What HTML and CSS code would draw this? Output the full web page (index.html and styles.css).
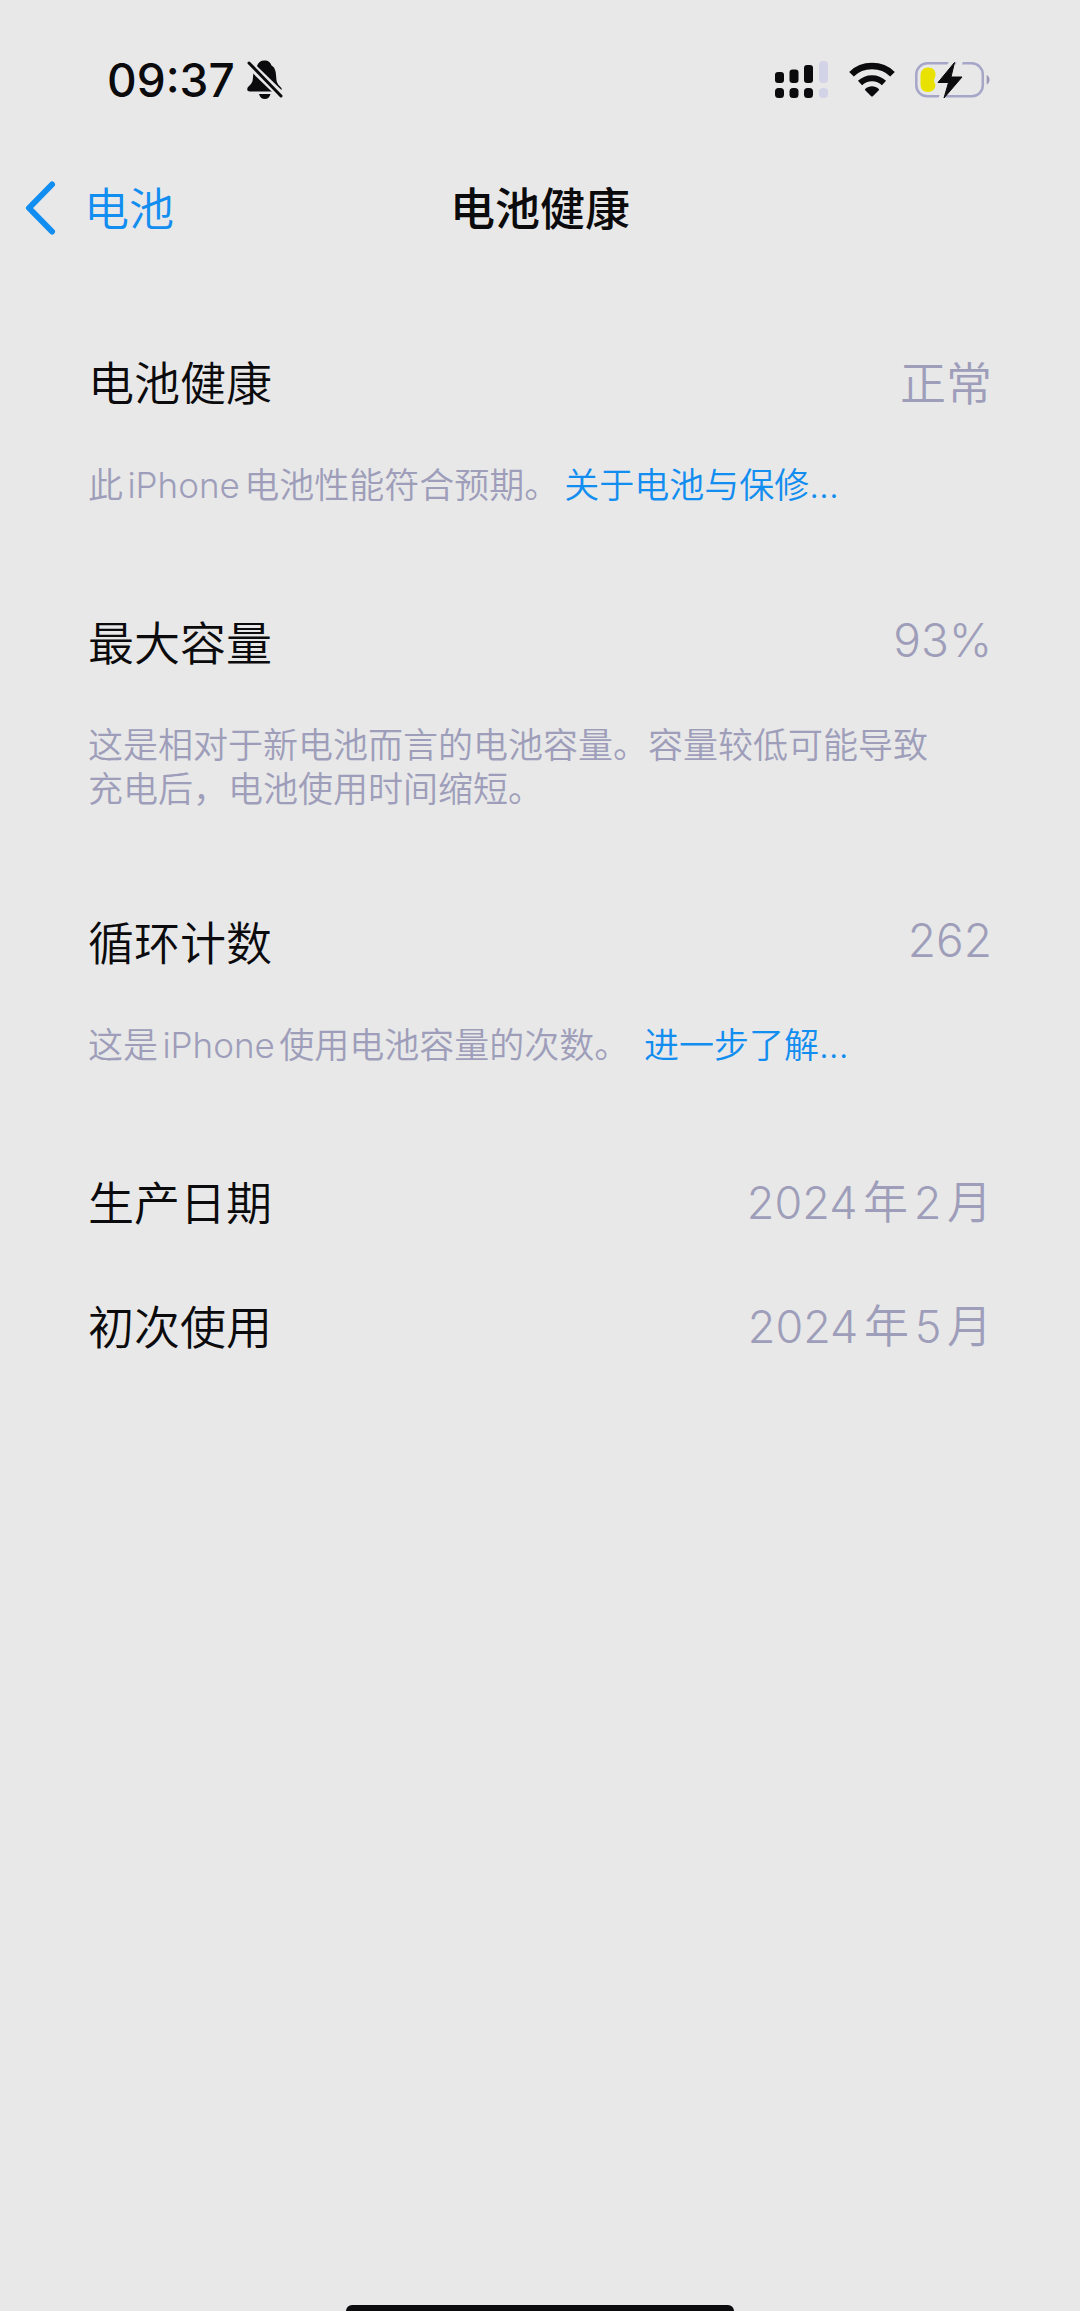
FILE: index.html
```html
<!DOCTYPE html>
<html lang="zh-CN">
<head>
<meta charset="utf-8">
<meta name="viewport" content="width=device-width, initial-scale=1">
<title>电池健康</title>
<link rel="stylesheet" href="styles.css">
</head>
<body>
<div class="status-bar">
  <div class="status-left">
    <span class="time">09:37</span>
    <svg class="bell" width="36" height="40" viewBox="0 0 36 40" aria-hidden="true">
      <path d="M17.500 0.500c-4 0-6.500 2-7.500 5.500C7.500 8 6.300 11.500 6 17c-.2 5-1.200 6.500-4.500 9.500C-.5 28.500-.3 31.500 3 31.500h28c3.500 0 4.800-2.500 2.500-4.500-3.500-3.500-4-5-4.300-10C29 10.500 27.500 7 24.500 5.500 23.500 2.500 21.500.5 17.500.5z" fill="#0b0b0d"/>
      <path d="M12 34h11.500c-.7 3-2.800 5-5.700 5S12.700 37 12 34z" fill="#0b0b0d"/>
      <path d="M1 3l34 33" stroke="#e8e8e8" stroke-width="8"/>
      <path d="M2 3l32 33" stroke="#0b0b0d" stroke-width="3" stroke-linecap="round"/>
    </svg>
  </div>
  <div class="status-right">
    <svg class="signal" width="54" height="38" viewBox="0 0 54 38" aria-hidden="true">
      <g fill="#0b0b0d">
        <rect x="0" y="11" width="9" height="11" rx="3"/>
        <rect x="14.500" y="8.500" width="9" height="13.500" rx="3"/>
        <rect x="29" y="4" width="9" height="18" rx="3"/>
        <rect x="0" y="27" width="9" height="10" rx="3.500"/>
        <rect x="14.500" y="27" width="9" height="10" rx="3.500"/>
        <rect x="29" y="27" width="9" height="10" rx="3.500"/>
      </g>
      <g fill="#d3d3e8">
        <rect x="44" y="0" width="9" height="22" rx="4"/>
        <rect x="44" y="27" width="9" height="10" rx="4"/>
      </g>
    </svg>
    <svg class="wifi" width="46" height="36" viewBox="0 0 46 36" aria-hidden="true">
      <g fill="none" stroke="#0b0b0d">
        <path d="M2.500 12.200C8 6.700 15 4 23 4s15 2.700 20.500 8.200" stroke-width="6.500"/>
        <path d="M11 21c3.500-3.300 7.500-4.800 12-4.800s8.500 1.500 12 4.800" stroke-width="6"/>
      </g>
      <path d="M16.200 27c3.800-3.600 9.800-3.600 13.600 0 .4.400.4.800 0 1.200L23.800 34.200c-.5.500-1.100.5-1.600 0L16.200 28.200c-.4-.4-.4-.8 0-1.200z" fill="#0b0b0d"/>
    </svg>
    <svg class="battery" width="76" height="38" viewBox="0 0 76 38" aria-hidden="true">
      <rect x="1.300" y="2.300" width="66.500" height="33" rx="11" fill="none" stroke="#a6a6c8" stroke-width="2.500"/>
      <path d="M71.700 14c3.800 1.500 3.800 8 0 9.500z" fill="#9a9ab8"/>
      <path d="M13 6.500c5.500 0 7.500 3 7.500 7 0 3-1.500 4-1.500 6s1.500 3 1.500 5-2 6.500-7.500 6.500c-5 0-7.500-3-7.500-8v-8c0-5 2.500-8.500 7.500-8.500z" fill="#e9e200"/>
      <path d="M38 0L33 8M45 0L42 10M31 28L26 38" stroke="#e8e8e8" stroke-width="6"/>
      <path d="M39.500 1.500L23 21.500h10.500L29 37l18-21H36z" fill="#0b0b0d" stroke="#0b0b0d" stroke-linejoin="round"/>
    </svg>
  </div>
</div>
<header class="nav">
  <a class="back" href="#battery">
    <svg class="chevron" width="32" height="54" viewBox="0 0 32 54" aria-hidden="true">
      <path d="M28 3.500L5 27l23 23.500" fill="none" stroke="#128df0" stroke-width="6" stroke-linecap="round" stroke-linejoin="round"/>
    </svg>
    <span>电池</span>
  </a>
  <h1 class="title">电池健康</h1>
</header>
<main class="settings">
  <section>
    <div class="row"><h2 class="label">电池健康</h2><span class="value">正常</span></div>
    <p class="note">此iPhone电池性能符合预期。<a href="#warranty">关于电池与保修...</a></p>
  </section>
  <section>
    <div class="row"><h2 class="label">最大容量</h2><span class="value">93%</span></div>
    <p class="note note-long">这是相对于新电池而言的电池容量。容量较低可能导致充电后，电池使用时间缩短。</p>
  </section>
  <section>
    <div class="row"><h2 class="label">循环计数</h2><span class="value">262</span></div>
    <p class="note">这是iPhone使用电池容量的次数。 <a href="#learn-more">进一步了解...</a></p>
  </section>
  <section>
    <div class="row"><h2 class="label">生产日期</h2><span class="value date">2024年2月</span></div>
    <div class="row"><h2 class="label">初次使用</h2><span class="value date">2024年5月</span></div>
  </section>
</main>
<div class="home-indicator"></div>
</body>
</html>
```
FILE: styles.css
```css
* {
  box-sizing: border-box;
}

body {
  margin: 0;
  min-height: 100vh;
  display: flex;
  flex-direction: column;
  background: #e8e8e8;
  color: #0b0b0d;
  font-family: Inter, "Noto Sans CJK SC", sans-serif;
  font-size: 46px;
  text-autospace: normal;
}

a {
  color: #128df0;
  text-decoration: none;
}

.status-bar {
  display: flex;
  justify-content: space-between;
  align-items: center;
  height: 160px;
  padding: 0 89px 0 107px;
}

.status-left,
.status-right {
  display: flex;
  align-items: center;
}

.status-left {
  gap: 12px;
}

.status-right {
  gap: 20px;
}

.time {
  font-weight: 500;
  line-height: 56px;
}

.nav {
  display: grid;
  grid-template-columns: 1fr auto 1fr;
  align-items: center;
  height: 96px;
  padding: 0 24px;
  font-size: 45px;
}

.back {
  display: flex;
  align-items: center;
  gap: 28px;
  font-weight: 350;
}

.back span,
.title {
  padding-bottom: 4px;
}

.title {
  margin: 0;
  font-size: 45px;
  font-weight: 500;
}

.label {
  margin: 0;
  font-size: 46px;
  font-weight: 350;
}

.settings {
  padding: 64px 88px 0;
}

.row {
  display: flex;
  justify-content: space-between;
  align-items: center;
  height: 124px;
  padding-bottom: 5px;
}

.value {
  color: #9e9eba;
  font-weight: 350;
}

.date {
  font-size: 45px;
}

.note {
  margin: 0;
  padding: 19px 48px 73px 0;
  color: #9e9eba;
  font-size: 35px;
  font-weight: 350;
  line-height: 44px;
}

.note-long {
  padding-bottom: 69px;
}

.note a {
  margin-left: 5px;
  text-autospace: no-autospace;
}

.home-indicator {
  align-self: center;
  width: 36%;
  height: 6px;
  margin-top: auto;
  border-radius: 9px 9px 0 0;
  background: #0b0b0d;
}
```
